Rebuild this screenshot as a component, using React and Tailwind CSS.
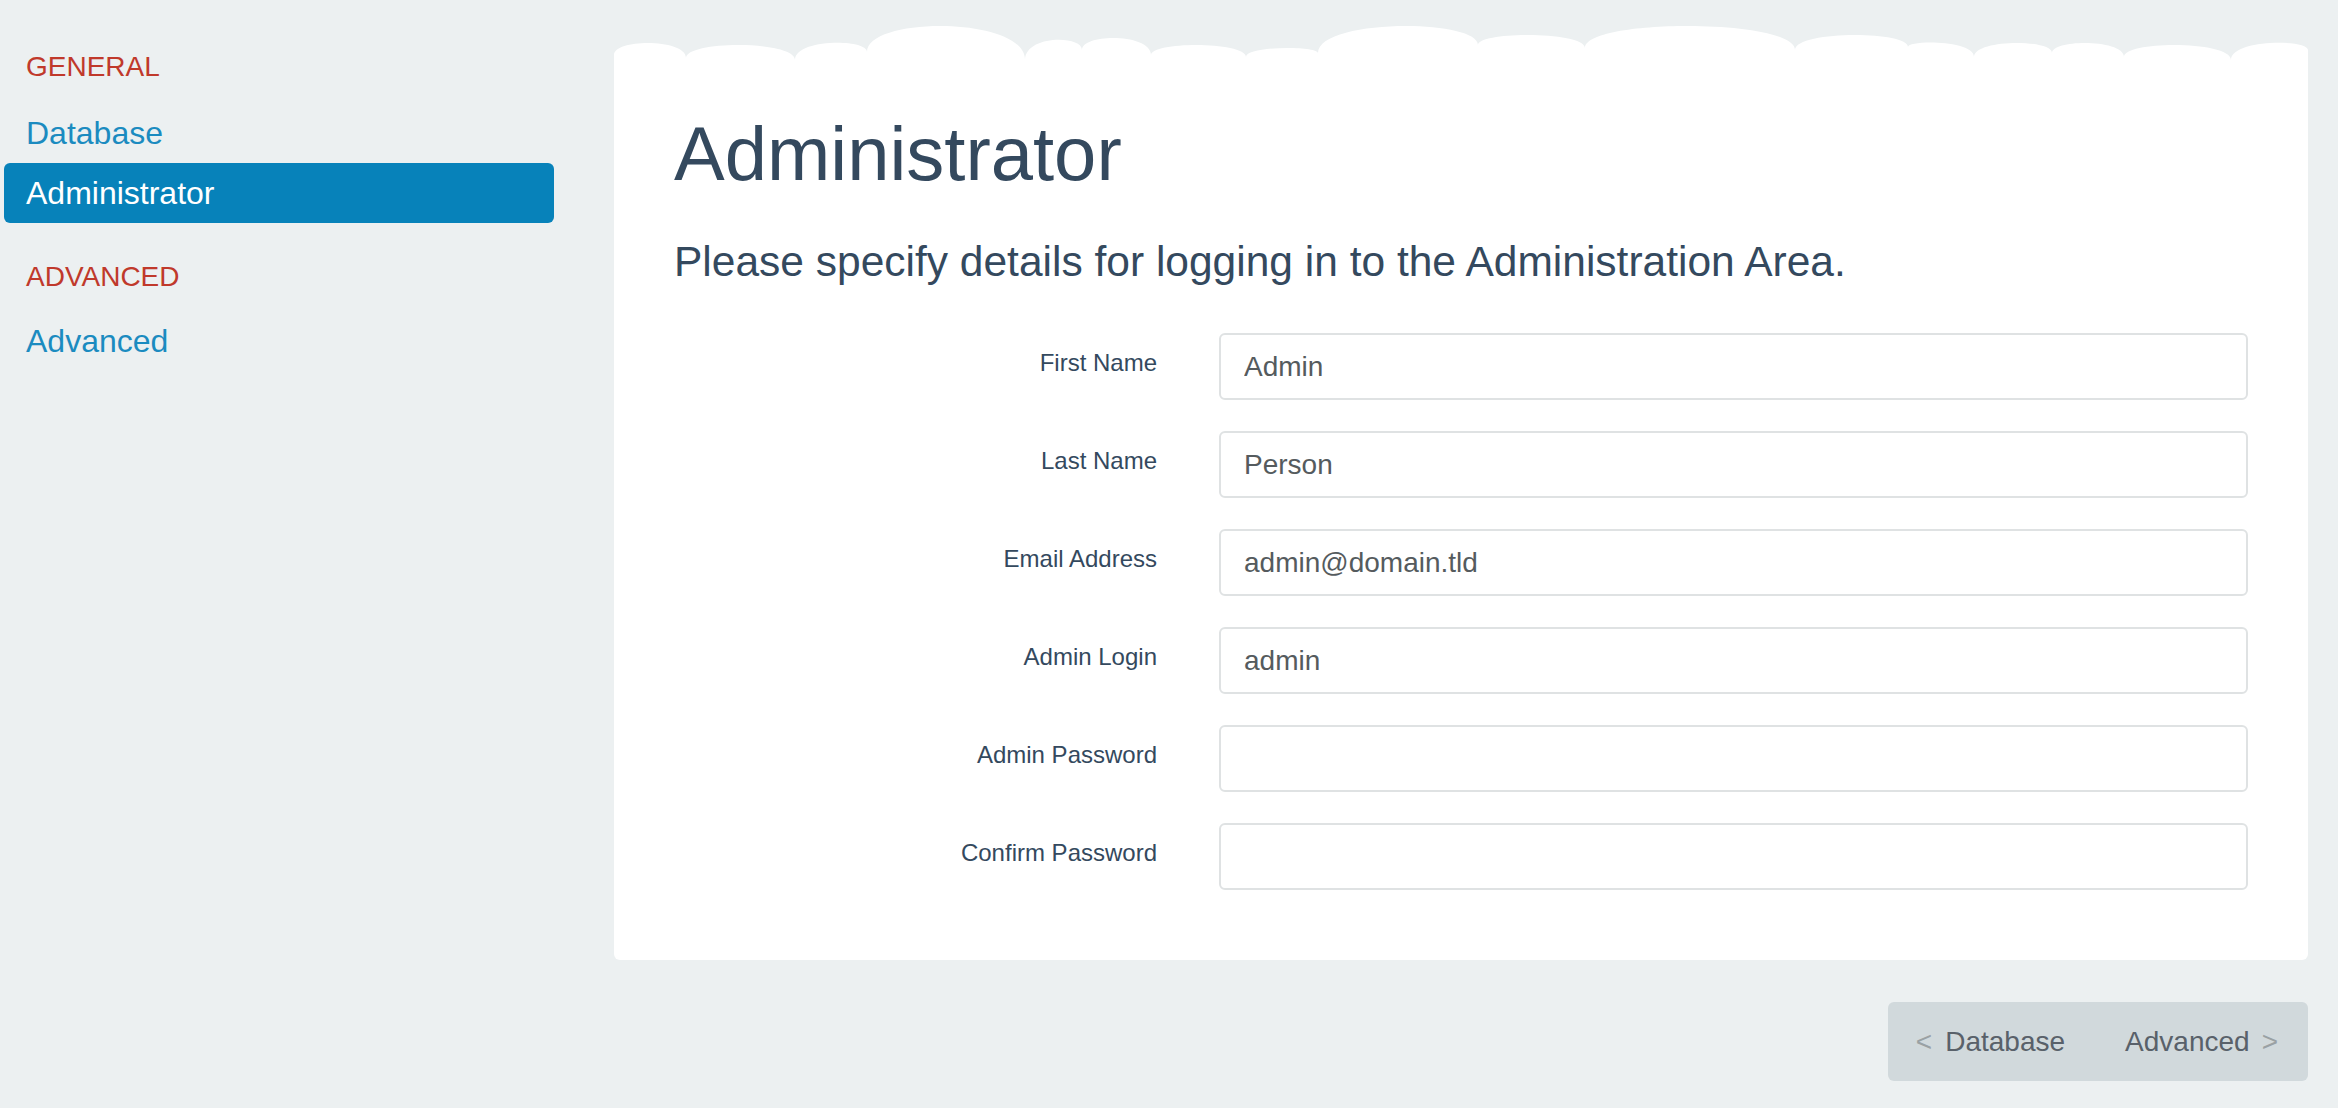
import { useState } from "react";

const font = { fontFamily: '"Liberation Sans", Arial, sans-serif' };

// cloud bumps along the top of the card: [endX, endY, peakY]
const bumps = [
    [72, 43, 28], [181, 45, 30], [253, 37, 28], [411, 45, 11], [468, 35, 25],
    [537, 40, 23], [632, 42, 30], [704, 38, 33], [864, 30, 11], [971, 33, 20],
    [1181, 35, 11], [1294, 32, 20], [1360, 42, 28], [1438, 38, 28], [1510, 42, 28],
    [1617, 45, 30], [1694, 35, 28],
];

const cloudPath = () => {
    let x = 0, y = 40;
    let d = `M0 50 L0 ${y}`;
    bumps.forEach(([x2, y2, p]) => {
        const h = ((p - (y + y2) / 8) * 4) / 3;
        d += ` C${x} ${h.toFixed(1)} ${x2} ${h.toFixed(1)} ${x2} ${y2}`;
        x = x2;
        y = y2;
    });
    return d + " L1694 50 Z";
};

const fields = [
    { label: "First Name", value: "Admin" },
    { label: "Last Name", value: "Person" },
    { label: "Email Address", value: "admin@domain.tld" },
    { label: "Admin Login", value: "admin" },
    { label: "Admin Password", value: "", type: "password" },
    { label: "Confirm Password", value: "", type: "password" },
];

const App = () => {
    const [active] = useState("Administrator");

    const navItem = (name) => (
        <div
            key={name}
            className={`h-[60px] leading-[60px] px-[22px] text-[32px] rounded-[6px] ${active === name ? "bg-[#0782ba] text-white" : "text-[#1b8bc0]"}`}
        >
            {name}
        </div>
    );

    return (
        <div className="flex w-full h-screen bg-[#ecf0f1] pl-[4px] overflow-hidden" style={font}>
            <div className="w-[550px] shrink-0 pt-[47px]">
                <div className="h-[40px] leading-[40px] px-[22px] text-[28px] text-[#c0392b]">GENERAL</div>
                <div className="mt-[16px]">
                    {navItem("Database")}
                    {navItem("Administrator")}
                </div>
                <div className="mt-[34px] h-[40px] leading-[40px] px-[22px] text-[28px] text-[#c0392b]">ADVANCED</div>
                <div className="mt-[14px]">{navItem("Advanced")}</div>
            </div>

            <div className="ml-[60px] w-[1694px] shrink-0 pt-[60px]">
                <div className="relative bg-white rounded-b-[6px] px-[60px] pt-[52px] pb-[70px]">
                    <svg
                        className="absolute left-0 -top-[45px] w-full h-[50px]"
                        viewBox="0 0 1694 50"
                        preserveAspectRatio="none"
                    >
                        <path d={cloudPath()} fill="#ffffff" />
                    </svg>
                    <h1 className="relative text-[76px] leading-[84px] text-[#34495e] font-normal">Administrator</h1>
                    <p className="mt-[42px] text-[42.5px] leading-[48px] text-[#34495e]">
                        Please specify details for logging in to the Administration Area.
                    </p>
                    <form className="mt-[47px] flex flex-col gap-[31px]">
                        {fields.map((f) => (
                            <div key={f.label} className="flex items-start">
                                <label className="w-[483px] shrink-0 text-right pt-[13px] text-[24px] leading-[34px] text-[#34495e]">
                                    {f.label}
                                </label>
                                <input
                                    type={f.type || "text"}
                                    defaultValue={f.value}
                                    className="ml-[62px] flex-1 h-[67px] border-2 border-[#dfe2e3] rounded-[6px] pl-[23px] text-[28px] text-[#555b5e] outline-none"
                                />
                            </div>
                        ))}
                    </form>
                </div>

                <div className="mt-[42px] flex justify-end">
                    <div className="flex h-[79px] items-center bg-[#d1d9dc] rounded-[6px] text-[28px] text-[#59616a]">
                        <div className="pl-[28px] pr-[30px] flex items-center">
                            <span className="text-[#9aa1a4]">&lt;</span>
                            <span className="ml-[13px]">Database</span>
                        </div>
                        <div className="pl-[30px] pr-[30px] flex items-center">
                            <span>Advanced</span>
                            <span className="ml-[12px] text-[#9aa1a4]">&gt;</span>
                        </div>
                    </div>
                </div>
            </div>
        </div>
    );
};

export default App;
